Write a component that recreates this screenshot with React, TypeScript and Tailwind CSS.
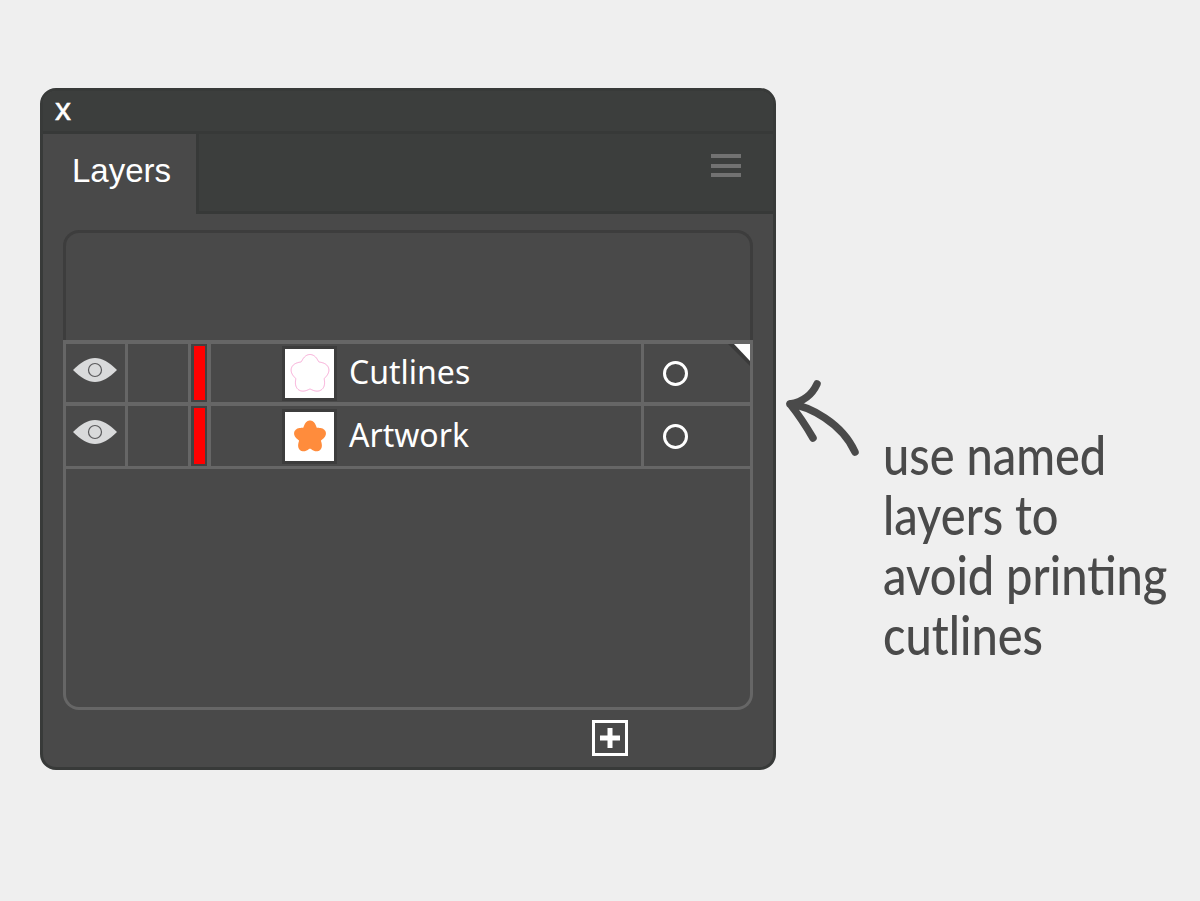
const rows = [
  { name: "Cutlines", art: "line", marked: true, height: "h-[62px] border-b-[4px]", eyePad: "pb-[6px]" },
  { name: "Artwork", art: "fill", marked: false, height: "h-[63px] border-b-[3px]", eyePad: "pb-[8px]" },
];

// five rounded lobes with soft notches, sampled as a polar curve
function flowerPath(inner: number, outer: number, cy = 0) {
  let d = "";
  for (let i = 0; i < 180; i++) {
    const phi = (i * 2 * Math.PI) / 180;
    const lobe = Math.pow(Math.abs(Math.cos((5 * phi) / 2)), 1.3);
    const r = inner + (outer - inner) * lobe;
    const x = r * Math.sin(phi);
    const y = cy - r * Math.cos(phi);
    d += `${i === 0 ? "M" : "L"}${x.toFixed(2)} ${y.toFixed(2)}`;
  }
  return d + "Z";
}

function Eye() {
  return (
    <svg width="44" height="26" viewBox="0 0 44 26" aria-hidden="true">
      <path d="M0 13C8 5 15 1 22 1S36 5 44 13C36 21 29 25 22 25S8 21 0 13Z" fill="#d9dadb" />
      <circle cx="22" cy="13" r="6.500" fill="none" stroke="#59595b" strokeWidth="1.200" />
    </svg>
  );
}

function Thumb({ art }: { art: string }) {
  return (
    <div className="flex h-[55px] w-[55px] items-center justify-center border-[3px] border-[#3d3d3d] bg-white">
      {art === "line" ? (
        <svg width="42" height="40" viewBox="-21 -20 42 40" aria-hidden="true">
          <path d={flowerPath(15, 19.500, 1)} fill="none" stroke="#f9a9d6" strokeWidth="1" />
        </svg>
      ) : (
        <svg width="36" height="36" viewBox="-18 -18 36 36" aria-hidden="true">
          <path d={flowerPath(11.500, 16.500, 1)} fill="#ff8c3c" />
        </svg>
      )}
    </div>
  );
}

function LayerRow({ row }: { row: (typeof rows)[number] }) {
  return (
    <div className={`relative flex border-[#666666] ${row.height}`}>
      <div className={`flex w-[62px] items-center justify-center border-r-[3px] border-[#666666] pr-[2px] ${row.eyePad}`}>
        <Eye />
      </div>
      <div className="w-[63px] border-r-[3px] border-[#666666]" />
      <div className="flex w-[20px] border-r-[4px] border-[#666666] bg-[#414141] py-[2px] pl-[3px] pr-[2px]">
        <div className="flex-1 bg-[#ff0000]" />
      </div>
      <div className="flex flex-1 items-center gap-[12px] border-r-[3px] border-[#666666] pl-[71px]">
        <Thumb art={row.art} />
        <span className="pb-[3px] font-['Noto_Sans',sans-serif] text-[32px] leading-none text-white">{row.name}</span>
      </div>
      <div className="flex w-[106px] items-center pl-[19px]">
        <div className="h-[25px] w-[25px] rounded-full border-[3px] border-white" />
      </div>
      {row.marked && (
        <svg className="absolute right-0 top-0" width="22" height="22" viewBox="0 0 22 22" aria-hidden="true">
          <path d="M0 0H22V22Z" fill="#3a3a3a" />
          <path d="M6 0H22V17Z" fill="#ffffff" />
        </svg>
      )}
    </div>
  );
}

function Panel() {
  return (
    <div className="flex h-[682px] w-[736px] shrink-0 flex-col overflow-hidden rounded-[16px] border-[3px] border-[#383a39] bg-[#494949]">
      <div className="flex h-[43px] items-center border-b-[3px] border-[#373938] bg-[#3c3e3d] pb-[4px] pl-[12px]">
        <span className="font-['Liberation_Sans',sans-serif] text-[32px] leading-none text-white [-webkit-text-stroke:0.5px_white]">x</span>
      </div>
      <div className="flex h-[80px]">
        <div className="flex w-[153px] items-start pl-[29px] pt-[20px]">
          <span className="font-['Liberation_Sans',sans-serif] text-[33px] leading-none text-white">Layers</span>
        </div>
        <div className="flex flex-1 justify-end border-b-[3px] border-l-[3px] border-[#373938] bg-[#3c3e3d] pr-[32px] pt-[20px]">
          <div className="flex h-[23px] w-[30px] flex-col justify-between">
            <div className="h-[4px] bg-[#727272]" />
            <div className="h-[4px] bg-[#727272]" />
            <div className="h-[4px] bg-[#727272]" />
          </div>
        </div>
      </div>
      <div className="mx-[20px] mt-[16px] flex h-[480px] flex-col">
        <div className="h-[110px] rounded-t-[16px] border-[3px] border-b-0 border-[#3d3d3d]" />
        <div className="border-x-[3px] border-t-[4px] border-[#666666]">
          {rows.map((row) => (
            <LayerRow key={row.name} row={row} />
          ))}
        </div>
        <div className="flex-1 rounded-b-[16px] border-[3px] border-t-0 border-[#666666]" />
      </div>
      <div className="mt-[10px] pl-[549px]">
        <div className="flex h-[36px] w-[36px] items-center justify-center border-[3px] border-white">
          <svg width="22" height="22" viewBox="0 0 22 22" aria-hidden="true">
            <path d="M8.500 1H13.500V8.500H21V13.500H13.500V21H8.500V13.500H1V8.500H8.500Z" fill="#ffffff" />
          </svg>
        </div>
      </div>
    </div>
  );
}

export default function App() {
  return (
    <div className="flex h-[901px] w-[1200px] items-start overflow-hidden bg-[#efefef] pl-[40px] pt-[88px]">
      <Panel />
      <svg className="ml-[8px] mt-[290px] shrink-0" width="80" height="82" viewBox="0 0 80 82" aria-hidden="true">
        <path
          d="M33 6C28 17 18 24 6 26M6 26C25 28 58 45 71 74M6 26C14 36 22 48 29 60"
          fill="none"
          stroke="#4a4a4a"
          strokeWidth="7.500"
          strokeLinecap="round"
          strokeLinejoin="round"
        />
      </svg>
      <div className="ml-[19px] mt-[337px] origin-left scale-x-[0.87] whitespace-nowrap font-['Lato',sans-serif] text-[54px] font-medium leading-[60px] text-[#4a4a4a]">
        <div>use named</div>
        <div>layers to</div>
        <div>avoid printing</div>
        <div>cutlines</div>
      </div>
    </div>
  );
}
